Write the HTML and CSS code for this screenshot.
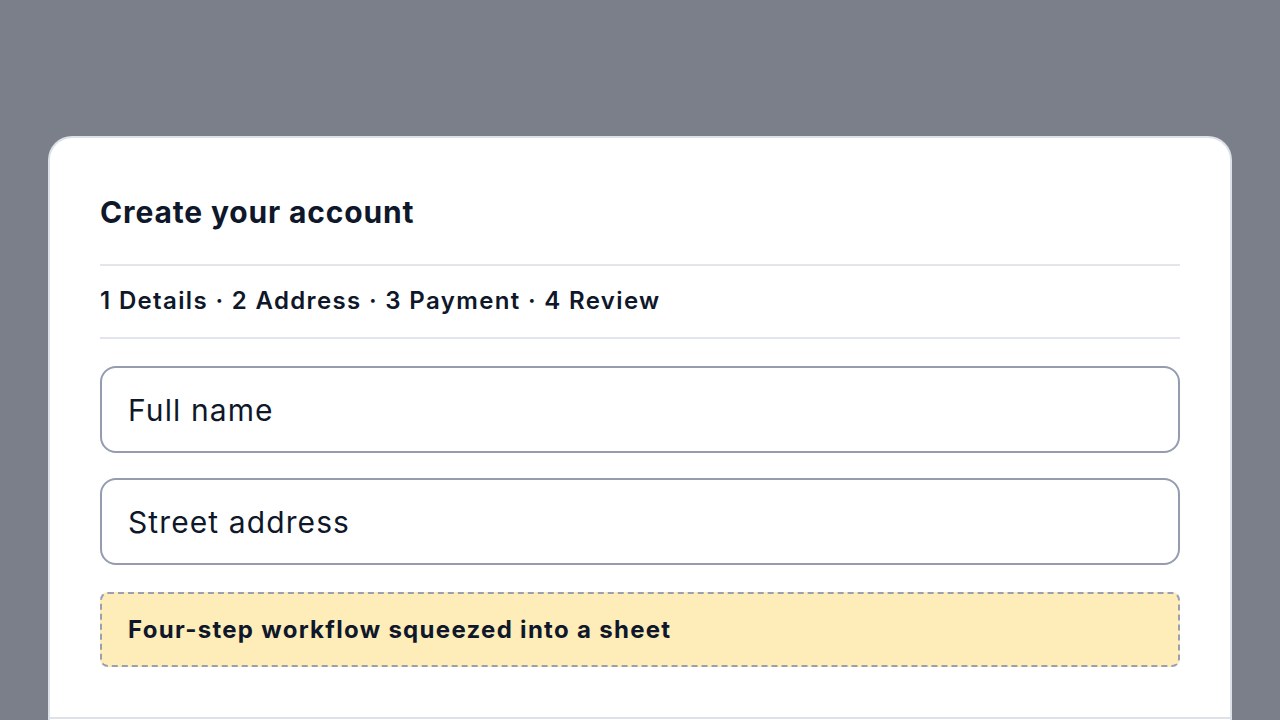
FILE: index.html
```html
<!DOCTYPE html>
<html lang="en">

<head>
    <meta charset="UTF-8">
    <meta name="viewport" content="width=device-width, initial-scale=1.0">
    <title>Create your account</title>
    <link rel="stylesheet" href="styles.css">
</head>

<body>
    <div class="sheet">
        <h2 class="title">Create your account</h2>
        <div class="steps">1 Details · 2 Address · 3 Payment · 4 Review</div>
        <div class="fields">
            <input class="field" type="text" placeholder="Full name">
            <input class="field" type="text" placeholder="Street address">
        </div>
        <div class="note">Four-step workflow squeezed into a sheet</div>
        <div class="sheet-footer"></div>
    </div>
</body>

</html>
```

FILE: styles.css
```css
body {
    margin: 0;
    height: 720px;
    overflow: hidden;
    background-color: #7b7f89;
    font-family: Inter, "Noto Sans", sans-serif;
    color: #0f172a;
}

.sheet {
    margin: 136px 48px 0;
    background: white;
    border: 2px solid #dde1ea;
    border-bottom: none;
    border-radius: 24px 24px 0 0;
    padding: 48px 50px 0;
    height: 800px;
}

.title {
    margin: 0;
    font-size: 30px;
    font-weight: 700;
    letter-spacing: 0.85px;
    line-height: 52px;
    padding-bottom: 26px;
    border-bottom: 2px solid #e2e5ee;
}

.steps {
    font-size: 24px;
    font-weight: 600;
    letter-spacing: 1.35px;
    line-height: 30px;
    padding: 20px 0 21px;
    border-bottom: 2px solid #e2e5ee;
}

.fields {
    display: flex;
    flex-direction: column;
    gap: 25px;
    margin-top: 27px;
}

.field {
    height: 87px;
    box-sizing: border-box;
    border: 2px solid #959cb0;
    border-radius: 16px;
    padding: 0 26px;
    font-family: inherit;
    font-size: 30px;
    letter-spacing: 1.1px;
    color: #0f172a;
    outline: none;
}

.field::placeholder {
    color: #0f172a;
}

.note {
    margin-top: 27px;
    height: 75px;
    box-sizing: border-box;
    display: flex;
    align-items: center;
    padding: 0 26px;
    background-color: #feecb9;
    border: 2px dashed #9aa0b0;
    border-radius: 8px;
    font-size: 24px;
    font-weight: 700;
    letter-spacing: 1.3px;
}

.sheet-footer {
    margin: 50px -50px 0;
    border-top: 2px solid #dde1ea;
}
```
